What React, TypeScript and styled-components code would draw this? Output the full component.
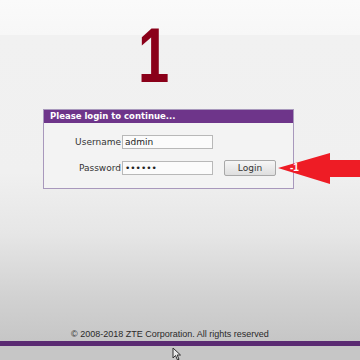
import React, { ReactElement } from 'react';
import styled, { createGlobalStyle } from 'styled-components';

const GlobalStyle = createGlobalStyle`
  html, body {
    margin: 0;
    padding: 0;
    width: 360px;
    height: 360px;
    overflow: hidden;
    background: #c4c4c4;
  }
`;

function App(): ReactElement {
  return (
    <Page>
      <GlobalStyle />
      <TopStrip />
      <Main>
        <StepNumber>1</StepNumber>
        <LoginRow>
          <LoginBox>
            <BoxHeader>Please login to continue...</BoxHeader>
            <Form>
              <Field>
                <Label>Username</Label>
                <Input value="admin" readOnly />
              </Field>
              <Field>
                <Label>Password</Label>
                <Input type="password" value="123456" readOnly />
                <LoginButton>Login</LoginButton>
              </Field>
            </Form>
          </LoginBox>
          <Arrow>
            <svg width="82" height="32" viewBox="0 0 82 32">
              <polygon points="0,15 52,0 52,7 82,7 82,24 52,24 52,31" fill="#ee1c25" />
            </svg>
            <ArrowText>-1</ArrowText>
          </Arrow>
        </LoginRow>
        <Spacer />
        <Copyright>© 2008-2018 ZTE Corporation. All rights reserved</Copyright>
      </Main>
      <BottomBar />
      <Bottom>
        <Cursor>
          <svg width="10" height="14" viewBox="0 0 10 14">
            <path d="M1,1 L1,11 L3.5,8.5 L5.5,13 L7,12.3 L5.2,8 L8.5,8 Z" fill="#e8e8e8" stroke="#303030" strokeWidth="1" />
          </svg>
        </Cursor>
      </Bottom>
    </Page>
  );
}

const Page = styled.div`
  display: flex;
  flex-direction: column;
  width: 360px;
  height: 360px;
  font-family: 'DejaVu Sans', Verdana, sans-serif;
`;

const TopStrip = styled.div`
  height: 35px;
  background: linear-gradient(#fafafa, #f7f7f7);
  flex-shrink: 0;
`;

const Main = styled.div`
  flex: 1;
  display: flex;
  flex-direction: column;
  background: linear-gradient(
    #f1f1f1 0%,
    #f0f0f0 45%,
    #e6e6e6 65%,
    #d2d2d2 85%,
    #c6c6c6 100%
  );
  position: relative;
`;

const StepNumber = styled.div`
  position: absolute;
  left: 138px;
  top: -19px;
  font-family: 'Liberation Sans', Arial, sans-serif;
  font-weight: bold;
  font-size: 78px;
  line-height: 78px;
  color: #8a0019;
  transform: scaleX(0.72);
  transform-origin: left top;
`;

const LoginRow = styled.div`
  display: flex;
  align-items: flex-start;
  margin-top: 74px;
  padding-left: 43px;
`;

const LoginBox = styled.div`
  width: 249px;
  height: 78px;
  border: 1px solid #a898bc;
  background: #f3f3f3;
  box-sizing: content-box;
`;

const BoxHeader = styled.div`
  height: 13px;
  background: #6e358a;
  color: #ffffff;
  font-weight: bold;
  font-size: 8.5px;
  line-height: 13px;
  padding-left: 6px;
`;

const Form = styled.div`
  display: flex;
  flex-direction: column;
  gap: 12px;
  padding-top: 12px;
`;

const Field = styled.div`
  display: flex;
  align-items: center;
  height: 14px;
`;

const Label = styled.span`
  width: 77px;
  text-align: right;
  font-size: 9px;
  color: #333333;
  padding-right: 1px;
`;

const Input = styled.input`
  width: 91px;
  height: 14px;
  box-sizing: border-box;
  margin: 0;
  padding: 0 2px;
  border: 1px solid #b8b8b8;
  background: #fbfbfb;
  font-family: 'DejaVu Sans', Verdana, sans-serif;
  font-size: 9px;
  color: #222222;
  outline: none;
`;

const LoginButton = styled.button`
  width: 52px;
  height: 16px;
  margin: 0 0 0 11px;
  padding: 0;
  border: 1px solid #a8a8a8;
  border-radius: 2px;
  background: linear-gradient(#f6f6f6, #dedede);
  font-family: 'DejaVu Sans', Verdana, sans-serif;
  font-size: 9px;
  color: #333333;
`;

const Arrow = styled.div`
  position: relative;
  margin-top: 44px;
  margin-left: -16px;
  display: flex;
`;

const ArrowText = styled.span`
  position: absolute;
  left: 12px;
  top: 9px;
  font-family: 'Liberation Sans', Arial, sans-serif;
  font-size: 10px;
  font-weight: bold;
  color: #ffffff;
`;

const Spacer = styled.div`
  flex: 1;
`;

const Copyright = styled.div`
  padding-left: 71px;
  padding-bottom: 1px;
  font-family: 'Liberation Sans', Arial, sans-serif;
  font-size: 9px;
  line-height: 12px;
  color: #2a2a2a;
`;

const BottomBar = styled.div`
  height: 5px;
  background: #5a2a72;
  flex-shrink: 0;
`;

const Bottom = styled.div`
  height: 14px;
  flex-shrink: 0;
  background: #c6c6c6;
  position: relative;
`;

const Cursor = styled.div`
  position: absolute;
  left: 172px;
  top: 1px;
  display: flex;
`;

export default App;
